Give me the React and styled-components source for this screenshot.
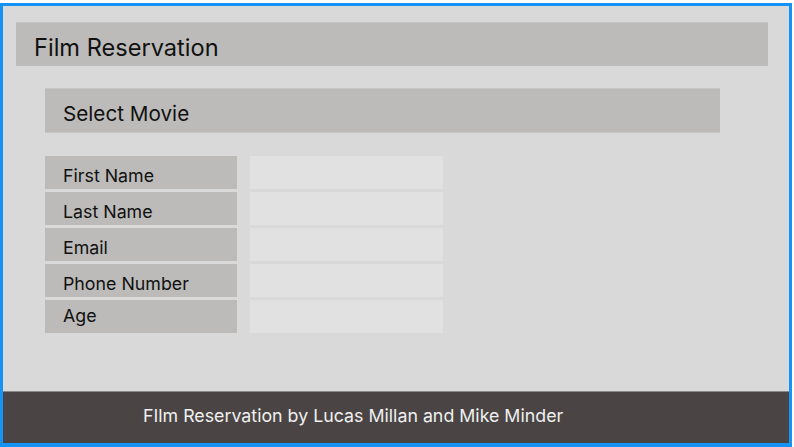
import React from "react";
import styled, { createGlobalStyle } from "styled-components";

const Global = createGlobalStyle`
  html, body {
    margin: 0;
    padding: 0;
    background: #ffffff;
  }
  body {
    font-family: Inter, "Noto Sans", sans-serif;
  }
`;

export const Frame = styled.div`
  box-sizing: border-box;
  margin-top: 3px;
  width: 792px;
  height: 444px;
  border: 3px solid #1593f5;
  border-bottom-width: 4px;
  background: #d9d9d9;
  display: flex;
  flex-direction: column;
`;

export const Main = styled.main`
  flex: 1;
  padding: 16px 21px 0 13px;
`;

export const Header = styled.header`
  height: 44px;
  background: #bcbbb9;
  border-top: 1px solid #c6c5c3;
  box-sizing: border-box;
  display: flex;
  align-items: center;
  padding: 6px 0 0 18px;
`;

export const H1 = styled.h1`
  margin: 0;
  font-size: 23.6px;
  font-weight: 400;
  color: #111;
`;

export const Content = styled.section`
  padding: 22px 0 0 29px;
`;

export const MovieSelect = styled.div`
  width: 675px;
  height: 45px;
  box-sizing: border-box;
  background: #bcbbb9;
  border-top: 1px solid #c6c5c3;
  border-bottom: 1px solid #c6c5c3;
  display: flex;
  align-items: center;
  padding: 6px 0 0 18px;
  font-size: 20.7px;
  color: #111;
`;

export const Form = styled.form`
  margin-top: 23px;
  display: flex;
  flex-direction: column;
  gap: 3px;
`;

export const Row = styled.div`
  display: flex;
  gap: 13px;
  height: 33px;
`;

export const Label = styled.label`
  width: 192px;
  box-sizing: border-box;
  background: #bcbbb9;
  padding-left: 18px;
  padding-top: ${(p) => (p.$tight ? "5px" : "9px")};
  font-size: 17.8px;
  color: #111;
`;

export const Input = styled.input`
  width: 193px;
  box-sizing: border-box;
  border: none;
  outline: none;
  background: #e1e1e1;
  font: inherit;
`;

export const Footer = styled.footer`
  height: 52px;
  box-sizing: border-box;
  background: #4a4544;
  border-top: 1px solid #8c8887;
  display: flex;
  align-items: center;
  padding: 0 0 4px 140px;
  font-size: 17.8px;
  color: #f0f0f0;
`;

const fields = ["First Name", "Last Name", "Email", "Phone Number", "Age"];

export default () => {
  return (
    <>
      <Global />
      <Frame>
        <Main>
          <Header>
            <H1>Film Reservation</H1>
          </Header>
          <Content>
            <MovieSelect>Select Movie</MovieSelect>
            <Form>
              {fields.map((f, i) => (
                <Row key={f}>
                  <Label $tight={i === fields.length - 1}>{f}</Label>
                  <Input />
                </Row>
              ))}
            </Form>
          </Content>
        </Main>
        <Footer>FIlm Reservation by Lucas Millan and Mike Minder</Footer>
      </Frame>
    </>
  );
};
